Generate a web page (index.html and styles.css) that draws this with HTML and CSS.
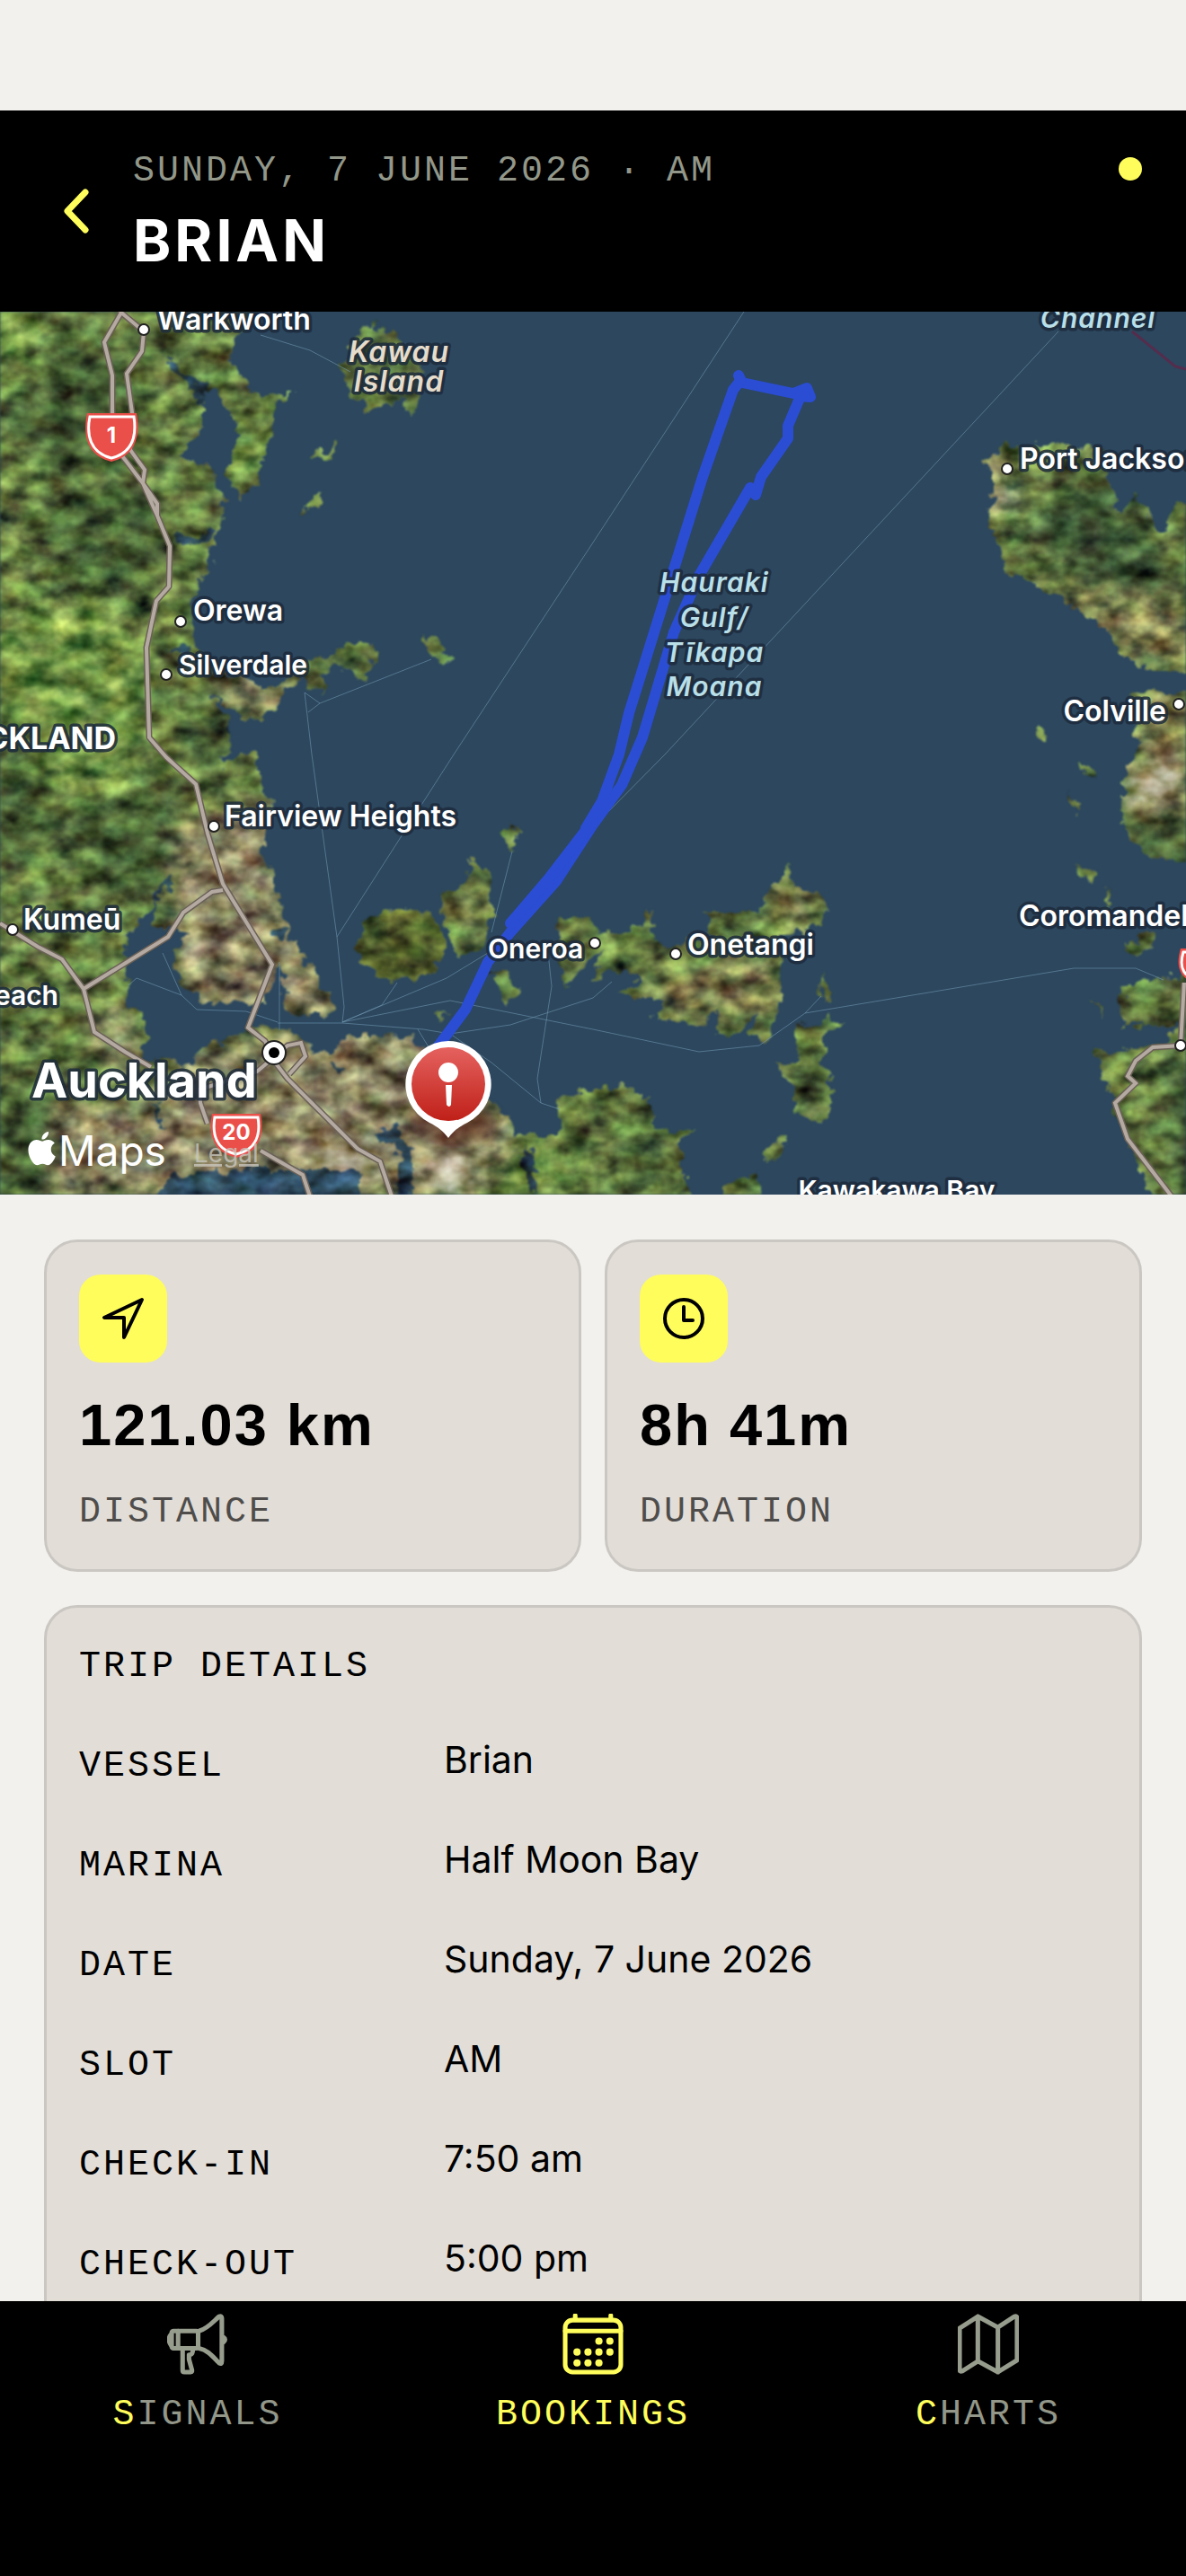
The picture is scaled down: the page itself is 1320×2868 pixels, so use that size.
FILE: index.html
```html
<!DOCTYPE html>
<html lang="en">
<head>
    <meta charset="utf-8">
    <meta name="viewport" content="width=device-width, initial-scale=1">
    <title>Brian - trip</title>
    <link rel="stylesheet" href="styles.css">
</head>
<body>

<header class="header">
    <button class="back" aria-label="Back">
        <svg width="34" height="54" viewBox="0 0 34 54"><path d="M26 6 L6 27 L26 48"/></svg>
    </button>
    <div class="header-text">
        <p class="mono header-date">SUNDAY, 7 JUNE 2026 · AM</p>
        <h1 class="header-title">BRIAN</h1>
    </div>
    <span class="status-dot"></span>
</header>

<main class="content">

    <svg class="map" viewBox="0 0 1320 983" preserveAspectRatio="xMidYMid slice" role="img" aria-label="Trip route">
        <defs>
            <filter id="terrain" x="0" y="0" width="1320" height="983" filterUnits="userSpaceOnUse" color-interpolation-filters="sRGB">
                <feTurbulence type="fractalNoise" baseFrequency="0.07" numOctaves="3" seed="4" result="warp"/>
                <feDisplacementMap in="SourceGraphic" in2="warp" scale="22" xChannelSelector="R" yChannelSelector="G" result="land"/>
                <feTurbulence type="fractalNoise" baseFrequency="0.035 0.05" numOctaves="5" seed="11" result="noise"/>
                <feColorMatrix in="noise" type="matrix" values="0.9 0.5 0 0 -0.22  1 0.3 0 0 -0.17  0.9 0.3 0.2 0 -0.24  0 0 0 0 1" result="grain"/>
                <feBlend in="grain" in2="land" mode="overlay" result="mix"/>
                <feComposite in="mix" in2="land" operator="in" result="cut"/>
                <feGaussianBlur in="cut" stdDeviation="0.8"/>
            </filter>
            <filter id="soft" x="-50%" y="-50%" width="200%" height="200%"><feGaussianBlur stdDeviation="12"/></filter>
            <filter id="shadow" x="-50%" y="-50%" width="200%" height="200%"><feGaussianBlur stdDeviation="7"/></filter>
            <linearGradient id="pin" x1="0" y1="0" x2="0" y2="1">
                <stop offset="0" stop-color="#e5625f"/>
                <stop offset="1" stop-color="#bf2018"/>
            </linearGradient>
            <clipPath id="coast">
                <!-- west mainland -->
                <path d="M-20 -20 H290 L269 26 255 54 274 77 290 91 328 91 309 104 309 124 295 151 290 184 269 211 252 181 269 137 252 104 240 84 227 91 227 127 202 164 231 171 244 194 252 227 240 254 234 277 223 307 210 327 219 371 236 397 270 407 295 421 324 407 345 387 379 377 387 364 415 371 415 387 404 411 383 397 364 394 358 427 337 411 316 424 301 447 274 457 248 434 236 421 253 457 259 481 244 504 282 487 290 524 303 547 293 581 295 611 307 637 314 671 324 697 349 737 375 777 349 786 320 781 316 761 311 724 295 771 274 767 227 771 206 751 189 714 215 691 168 684 177 651 163 671 143 697 139 720 143 747 139 774 160 784 160 831 210 841 219 824 257 807 295 794 337 804 345 817 366 831 375 811 455 807 471 821 480 850 547 877 572 907 574 921 593 917 623 917 623 877 657 867 694 862 719 874 729 907 753 914 778 907 755 927 761 957 769 1003 H-20 Z"/>
                <!-- Coromandel -->
                <path d="M1100 167 L1123 147 1165 147 1228 154 1237 194 1241 221 1266 207 1291 247 1302 240 1304 214 1340 204 V404 L1279 401 1245 377 1232 354 1194 327 1157 307 1123 287 1102 241 1104 194Z"/>
                <path d="M1258 424 H1340 V617 L1308 611 1262 597 1249 567 1249 524 1266 491Z"/>
                <path d="M1340 741 L1262 744 1245 767 1249 797 1283 797 1310 790 1300 815 1283 817 1220 824 1224 841 1237 874 1249 904 1266 951 1291 1003 H1340Z"/>
                <!-- islands -->
                <path d="M417 12 L446 31 467 61 465 107 459 117 446 97 408 111 396 94 381 77 383 54 400 24Z"/>
                <path d="M360 199 L363 210 340 226 338 217Z M374 143 L378 156 350 166 346 160 366 152Z M471 361 L490 368 501 386 497 396 480 380Z"/>
                <path d="M522 607 L547 624 549 667 539 701 516 721 503 701 490 671 497 647 518 634Z"/>
                <path d="M566 566 L575 578 570 602 560 590Z M547 734 L583 751 562 773 556 750Z M483 778 L498 780 492 794Z"/>
                <path d="M621 677 L657 677 668 697 715 684 725 668 729 701 757 707 790 694 786 667 845 667 858 641 883 618 885 641 912 647 925 667 912 684 870 691 866 717 870 771 854 811 837 807 841 777 816 811 799 807 799 777 774 797 729 787 740 767 689 759 715 741 677 734 660 750 670 712 640 735 627 750 623 724Z"/>
                <path d="M883 797 L940 787 917 811 917 837 929 864 917 904 887 891 879 857 862 837 891 831Z"/>
                <path d="M914 735 L924 750 922 770 915 760Z M877 914 L876 924 862 937 856 950 852 934Z M805 974 L841 957 854 1000 800 1000Z"/>
                <path d="M1152 464 L1166 466 1164 480 1154 478Z M1203 500 L1214 512 1218 518 1204 514Z M1192 540 L1204 556 1190 552Z M1199 617 L1216 622 1216 632 1202 634Z M1232 640 L1236 652 1228 676Z M1250 706 L1283 692 1286 705 1260 720Z M1216 764 L1222 772 1226 786 1216 776Z"/>
            </clipPath>
        </defs>

        <rect class="sea" width="1320" height="983"/>

        <g filter="url(#terrain)">
            <g clip-path="url(#coast)">
                <rect x="-20" y="-20" width="1380" height="1040" fill="#647b44"/>
                <g filter="url(#soft)">
                    <path fill="#4a6239" d="M60 40 L130 30 150 130 80 200 0 120Z M60 200 L180 190 170 300 100 320 40 240Z M0 500 L50 480 60 600 0 620Z M60 560 L180 540 190 640 120 660Z M210 470 L260 450 250 510 200 520Z M0 850 L60 860 60 983 0 983Z M700 880 L730 900 720 983 690 983Z"/>
                    <path fill="#6f9146" d="M0 330 L120 320 170 400 150 520 60 540 0 430Z M60 0 L10 90 -10 60 0 0Z M230 160 L300 110 280 200Z M590 910 L620 910 640 983 540 983Z"/>
                    <path fill="#8a8366" d="M200 570 L300 540 310 650 380 790 220 780 190 700Z M210 830 L340 800 480 800 580 920 520 983 60 983 60 890 160 880Z M110 780 L150 790 150 850 110 830Z M240 400 L330 410 290 455 250 430Z"/>
                    <path fill="#858157" d="M1100 150 L1130 160 1120 240 1100 220Z M1160 300 L1320 330 1320 404 1240 370Z M1270 424 L1320 424 1320 600 1260 560Z M700 750 L860 720 860 780 750 780Z M850 630 L920 650 880 690Z M500 660 L545 640 530 690Z"/>
                    <path fill="#415838" d="M1130 230 L1230 180 1290 260 1320 330 1200 300Z M1300 830 L1340 830 1340 983 1310 983Z M1260 560 L1320 560 1320 610 1270 600Z M890 850 L920 850 910 900Z M420 30 L460 60 450 80 400 60Z"/>
                    <path fill="#bcb49d" d="M1250 520 L1310 500 1310 530 1260 550Z M480 950 L520 940 520 983 480 983Z M360 930 L420 940 410 955 350 955Z M1105 190 L1125 195 1125 215 1105 215Z"/>
                </g>
                <g class="water">
                    <path d="M173 1003 L185 964 240 956 358 954 400 957 400 1003Z"/>
                    <path d="M440 995 L446 935 420 915 440 905 460 940 455 995Z M585 925 L600 960 592 985 582 950Z M168 870 L184 905 190 912 178 905Z"/>
                    <path d="M180 50 L240 90 225 100Z M185 375 L212 370 210 382Z M195 250 L238 244 236 256 200 260Z M370 835 L385 840 376 852Z M250 430 L262 480 252 470Z M170 655 L190 625 180 660Z"/>
                    <circle cx="311" cy="694" r="8"/>
                </g>
            </g>
            <ellipse cx="446" cy="704" rx="48" ry="40" fill="#56632f"/>
        </g>

        <g class="ferry">
            <path d="M828 0 L660 257 505 493 375 696"/>
            <path d="M1178 22 L740 493 660 574"/>
            <path d="M339 424 L347 493 375 696 383 774 381 791"/>
            <path d="M339 424 L356 436 480 387 M356 436 L343 446"/>
            <path d="M290 26 L345 43 390 67"/>
            <path d="M381 791 L425 772 442 747 M381 791 L497 742 543 714"/>
            <path d="M381 791 L501 767 660 799 778 824 845 817 896 781 1195 731 1264 731 1295 744 M896 781 L914 762"/>
            <path d="M309 792 H381 L471 799 501 804 568 794 660 764 681 746"/>
            <path d="M465 799 L490 840 M501 804 L547 836 602 881 623 888 M602 881 L598 854 614 751 610 714 M570 601 L547 691"/>
            <path d="M181 714 L202 761 219 777 274 779 309 791 M143 750 L152 742 202 761 M311 724 V800"/>
        </g>
        <path class="boundary" d="M1260 22 L1308 61 1320 64"/>

        <g class="road-edge">
            <path id="roads" d="M132 -5 L135 1 116 34 125 71 125 130 137 162 159 191 175 227 189 261 188 306 174 322 163 374 166 474 185 496 218 526 231 581 248 637 303 727 276 797 295 812 307 837 320 854 398 932 423 946 436 985 M135 1 L160 22 158 44 141 69 147 112 145 154 161 176 159 191 175 214 175 227 M248 644 L236 646 204 669 187 696 93 754 M0 681 L42 707 69 721 93 754 105 802 139 824 168 841 M305 830 L286 846 222 866 223 881 231 904 M290 934 L337 961 345 985 M311 825 L320 817 335 814 340 829 322 849 M1318 747 L1314 817 1283 819 1264 834 1255 851 1264 859 1241 881 1255 921 1304 985"/>
        </g>
        <use href="#roads" class="road"/>

        <path class="route" d="M822 71 L826 79 883 91 898 85 902 95 891 94 877 127 877 141 847 184 841 204 835 196 778 294 750 357 715 474 692 527 660 571 619 634 568 691 543 724 518 777 486 820"/>
        <path class="route" d="M824 77 L816 87 782 184 753 277 700 447 689 493 670 545 652 575 M568 681 L610 632 660 567"/>

        <g class="shield">
            <path d="M97 113 H152 C156 137 152 160 124 167 C96 160 92 137 97 113Z"/>
            <path class="shield-line" d="M100 117 H149 C152 137 148 157 124 163 C100 157 96 137 100 117Z"/>
            <path d="M236 893 H290 C294 915 290 936 263 942 C236 936 232 915 236 893Z"/>
            <path class="shield-line" d="M239 897 H287 C290 915 286 933 263 938 C240 933 236 915 239 897Z"/>
            <path d="M1314 709 H1340 V751 C1312 745 1308 730 1314 709Z"/>
            <path class="shield-line" d="M1317 713 H1340 V746 C1316 742 1312 730 1317 713Z"/>
        </g>
        <text class="shield-text" x="124" y="146">1</text>
        <text class="shield-text" x="263" y="922">20</text>

        <g class="town-dot">
            <circle cx="160" cy="20" r="6"/>
            <circle cx="201" cy="345" r="6"/>
            <circle cx="185" cy="404" r="6"/>
            <circle cx="238" cy="573" r="6"/>
            <circle cx="14" cy="688" r="6"/>
            <circle cx="662" cy="703" r="6"/>
            <circle cx="752" cy="715" r="6"/>
            <circle cx="1121" cy="175" r="6"/>
            <circle cx="1312" cy="437" r="6"/>
            <circle cx="1314" cy="817" r="6"/>
            <circle cx="305" cy="825" r="13"/>
        </g>
        <circle cx="305" cy="825" r="6"/>

        <g class="label">
            <text x="175" y="20">Warkworth</text>
            <text x="215" y="344">Orewa</text>
            <text x="199" y="404" class="small">Silverdale</text>
            <text x="250" y="573">Fairview Heights</text>
            <text x="26" y="688">Kumeū</text>
            <text x="65" y="772" class="end small">Beach</text>
            <text x="543" y="720" class="small">Oneroa</text>
            <text x="765" y="716">Onetangi</text>
            <text x="1135" y="175">Port Jackson</text>
            <text x="1298" y="456" class="end">Colville</text>
            <text x="1134" y="684">Coromandel</text>
            <text x="998" y="989" class="mid small">Kawakawa Bay</text>
            <text x="129" y="487" class="end region">AUCKLAND</text>
            <text x="35" y="875" class="city">Auckland</text>
        </g>
        <g class="label island">
            <text x="444" y="56">Kawau</text>
            <text x="444" y="89">Island</text>
        </g>
        <g class="label marine">
            <text x="795" y="312">Hauraki</text>
            <text x="795" y="351">Gulf/</text>
            <text x="795" y="390">Tīkapa</text>
            <text x="795" y="428">Moana</text>
            <text x="1222" y="18">Channel</text>
        </g>

        <!-- start / end pin -->
        <ellipse cx="505" cy="905" rx="48" ry="26" fill="#4a1410" opacity=".5" filter="url(#shadow)"/>
        <path fill="#fff" d="M499 812 A48 48 0 0 1 520 903 C510 908 505 912 499 920 C493 912 488 908 478 903 A48 48 0 0 1 499 812Z"/>
        <circle cx="499" cy="860" r="41" fill="url(#pin)"/>
        <circle cx="499" cy="847" r="11" fill="#fff"/>
        <path fill="#fff" d="M496 861 h7 l-1 22 q-2 4 -5 0Z"/>

        <path fill="#fff" transform="translate(28 913) scale(1.55)" d="M12.152 6.896c-.948 0-2.415-1.078-3.96-1.04-2.04.027-3.91 1.183-4.961 3.014-2.117 3.675-.546 9.103 1.519 12.09 1.013 1.454 2.208 3.09 3.792 3.039 1.52-.065 2.09-.987 3.935-.987 1.831 0 2.35.987 3.96.948 1.637-.026 2.676-1.48 3.676-2.948 1.156-1.688 1.636-3.325 1.662-3.415-.039-.013-3.182-1.221-3.22-4.857-.026-3.04 2.48-4.494 2.597-4.559-1.429-2.09-3.623-2.324-4.39-2.376-2-.156-3.675 1.09-4.61 1.09zM15.53 3.83c.843-1.012 1.4-2.427 1.245-3.83-1.207.052-2.662.805-3.532 1.818-.78.896-1.454 2.338-1.273 3.714 1.338.104 2.715-.688 3.559-1.701"/>
        <text class="maps-logo" x="65" y="951">Maps</text>
        <a href="#legal"><text class="legal" x="216" y="947">Legal</text></a>
    </svg>

    <section class="panels">
        <div class="stats">
            <div class="card stat">
                <span class="stat-icon">
                    <svg width="98" height="98" viewBox="0 0 98 98"><path d="M70 28 L28 48 H50 V70 Z"/></svg>
                </span>
                <strong class="stat-value">121.03 km</strong>
                <span class="mono stat-label">DISTANCE</span>
            </div>
            <div class="card stat">
                <span class="stat-icon">
                    <svg width="98" height="98" viewBox="0 0 98 98"><circle cx="49" cy="49" r="21"/><path d="M49 36 V51 H59"/></svg>
                </span>
                <strong class="stat-value">8h 41m</strong>
                <span class="mono stat-label">DURATION</span>
            </div>
        </div>

        <div class="card details">
            <h2 class="mono details-title">TRIP DETAILS</h2>
            <dl class="rows">
                <div class="row"><dt class="mono">VESSEL</dt><dd>Brian</dd></div>
                <div class="row"><dt class="mono">MARINA</dt><dd>Half Moon Bay</dd></div>
                <div class="row"><dt class="mono">DATE</dt><dd>Sunday, 7 June 2026</dd></div>
                <div class="row"><dt class="mono">SLOT</dt><dd>AM</dd></div>
                <div class="row"><dt class="mono">CHECK-IN</dt><dd>7:50 am</dd></div>
                <div class="row"><dt class="mono">CHECK-OUT</dt><dd>5:00 pm</dd></div>
            </dl>
        </div>
    </section>
</main>

<nav class="tabs">
    <a class="tab" href="#signals">
        <svg width="68" height="68" viewBox="0 0 67 67">
            <rect x="5" y="19" width="29" height="19" rx="2"/>
            <path d="M12 19 V38"/>
            <path d="M4 23 Q0 28 4 34"/>
            <path d="M35 19 C45 16 50 9 57 3 Q60 2 60 5 V52 Q60 56 57 54 C50 47 45 40 35 38"/>
            <path d="M62 26 Q65 28 62 31"/>
            <path d="M17 38 V62 Q17 64 19 64 H26 Q28 64 27 61 L24 50 V45 Q29 45 28 38"/>
        </svg>
        <span class="mono"><b>S</b>IGNALS</span>
    </a>
    <a class="tab active" href="#bookings">
        <svg width="68" height="68" viewBox="0 0 67 67">
            <rect x="3" y="7" width="61" height="57" rx="8"/>
            <path d="M3 19 H64 M14 2 V6 M53 2 V6"/>
            <g class="dots">
                <circle cx="40" cy="30" r="4"/><circle cx="52" cy="30" r="4"/>
                <circle cx="16" cy="42" r="4"/><circle cx="28" cy="42" r="4"/><circle cx="40" cy="42" r="4"/><circle cx="52" cy="42" r="4"/>
                <circle cx="16" cy="54" r="4"/><circle cx="28" cy="54" r="4"/><circle cx="40" cy="54" r="4"/>
            </g>
        </svg>
        <span class="mono">BOOKINGS</span>
    </a>
    <a class="tab" href="#charts">
        <svg width="68" height="68" viewBox="0 0 67 67">
            <path d="M2 16 L22 3 44 15 62 3 Q65 2 65 5 V51 L44 64 22 52 5 63 Q2 64 2 61Z M22 3 V52 M44 15 V64"/>
        </svg>
        <span class="mono"><b>C</b>HARTS</span>
    </a>
</nav>

</body>
</html>
```

FILE: styles.css
```css
* {
    box-sizing: border-box;
    margin: 0;
    padding: 0;
}

body {
    height: 100vh;
    padding-top: 123px;
    display: flex;
    flex-direction: column;
    background: #f3f1ed;
    color: #000;
    font-family: Inter, "Liberation Sans", sans-serif;
}

.mono {
    font-family: "Liberation Mono", monospace;
    font-size: 40px;
    font-weight: 400;
    letter-spacing: 3px;
    white-space: nowrap;
}

/* header */
.header {
    display: flex;
    align-items: center;
    gap: 25px;
    padding: 40px 49px;
    background: #000;
}

.back {
    width: 74px;
    height: 74px;
    display: flex;
    align-items: center;
    justify-content: center;
    background: none;
    border: 0;
}

.back svg {
    fill: none;
    stroke: #fffd5c;
    stroke-width: 7;
    stroke-linecap: round;
    stroke-linejoin: round;
}

.header-text {
    flex: 1;
}

.header-date {
    line-height: 56px;
    color: #929789;
}

.header-title {
    margin-top: 10px;
    font-size: 64px;
    line-height: 78px;
    font-weight: 700;
    letter-spacing: 4px;
    color: #fff;
}

.status-dot {
    align-self: flex-start;
    width: 26px;
    height: 26px;
    margin-top: 12px;
    border-radius: 50%;
    background: #fffd5c;
}

/* map */
.content {
    flex: 1;
    min-height: 0;
    overflow: hidden;
}

.map {
    display: block;
    width: 100%;
    height: 983px;
    font-family: Inter, "Liberation Sans", sans-serif;
}

.sea,
.water {
    fill: #2c475e;
}

.ferry {
    fill: none;
    stroke: #6f96b0;
    stroke-opacity: .6;
    stroke-width: 1;
}

.boundary {
    fill: none;
    stroke: #562c4d;
    stroke-width: 3;
}

.road-edge {
    fill: none;
    stroke: #6b6157;
    stroke-width: 7;
    stroke-linejoin: round;
}

.road {
    fill: none;
    stroke: #b5aaa2;
    stroke-width: 4;
}

.route {
    fill: none;
    stroke: #2b4dd3;
    stroke-width: 12;
    stroke-linecap: round;
    stroke-linejoin: round;
}

.shield {
    fill: #ea4f4a;
}

.shield-line {
    fill: none;
    stroke: #fff;
    stroke-width: 3;
}

.shield-text {
    font-size: 24px;
    font-weight: 700;
    fill: #fff;
    text-anchor: middle;
}

.town-dot {
    fill: #fff;
    stroke: #222;
    stroke-width: 2;
}

.label {
    font-size: 32px;
    font-weight: 600;
    fill: #fff;
    stroke: #1d2b3c;
    stroke-opacity: .85;
    stroke-width: 7;
    stroke-linejoin: round;
    paint-order: stroke;
}

.small {
    font-size: 30px;
}

.region {
    font-size: 34px;
    font-weight: 700;
}

.city {
    font-size: 54px;
    font-weight: 700;
}

.end {
    text-anchor: end;
}

.mid {
    text-anchor: middle;
}

.island,
.marine {
    font-style: italic;
    letter-spacing: 1px;
    text-anchor: middle;
}

.island {
    fill: #e6dccb;
}

.marine {
    font-size: 30px;
    fill: #b9dfe8;
}

.maps-logo {
    font-size: 46px;
    fill: #fff;
}

.legal {
    font-size: 28px;
    fill: #c9c6bd;
    fill-opacity: .8;
    text-decoration: underline;
}

/* cards */
.panels {
    display: flex;
    flex-direction: column;
    gap: 37px;
    padding: 50px 49px;
}

.stats {
    display: grid;
    grid-template-columns: 1fr 1fr;
    gap: 26px;
}

.card {
    padding: 36px;
    border: 3px solid #cac7c2;
    border-radius: 37px;
    background: #e2ddd7;
}

.stat {
    display: flex;
    flex-direction: column;
    gap: 25px;
}

.stat-icon {
    width: 98px;
    height: 98px;
    border-radius: 24px;
    background: #fffd5c;
}

.stat-icon svg {
    display: block;
    fill: none;
    stroke: #000;
    stroke-width: 4;
    stroke-linecap: round;
    stroke-linejoin: round;
}

.stat-value {
    font-family: "Liberation Sans", Arial, sans-serif;
    font-size: 65px;
    line-height: 90px;
    letter-spacing: 2px;
}

.stat-label {
    line-height: 54px;
    color: #4f4d4b;
}

.details {
    padding-bottom: 74px;
}

.details-title {
    line-height: 60px;
}

.rows {
    display: flex;
    flex-direction: column;
    gap: 51px;
    margin-top: 51px;
}

.row {
    display: grid;
    grid-template-columns: 406px 1fr;
    align-items: start;
}

.row dt {
    line-height: 60px;
}

.row dd {
    font-size: 41px;
    line-height: 44px;
}

/* bottom tabs */
.tabs {
    display: grid;
    grid-template-columns: 1fr 1fr 1fr;
    padding: 14px 0 152px;
    background: #000;
}

.tab {
    display: flex;
    flex-direction: column;
    align-items: center;
    gap: 18px;
    color: #929789;
    text-decoration: none;
}

.tab svg {
    fill: none;
    stroke: #979d8d;
    stroke-width: 5;
    stroke-linecap: round;
    stroke-linejoin: round;
}

.tab .mono {
    line-height: 54px;
}

.tab b {
    font-weight: 400;
    color: #fffd5c;
}

.active {
    color: #fffd5c;
}

.active svg {
    stroke: #fffd5c;
}

.active .dots {
    fill: #fffd5c;
    stroke: none;
}
```
